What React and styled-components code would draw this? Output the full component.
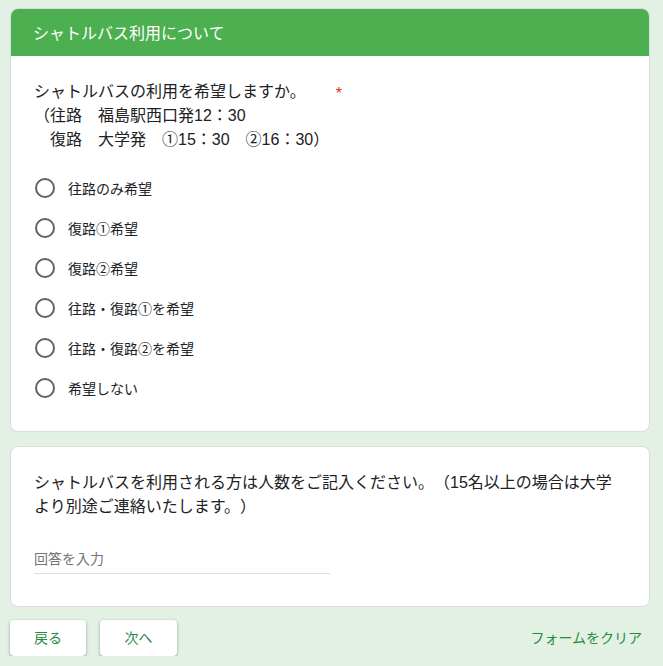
import React from 'react';
import styled, { createGlobalStyle } from 'styled-components';

const Global = createGlobalStyle`
  body {
    margin: 0;
    background: #e3f1e4;
    font-family: "Liberation Sans", "Noto Sans CJK JP", sans-serif;
    color: #202124;
    text-spacing-trim: space-all;
  }
`;

const Page = styled.div`
  padding: 8px 13px 0 10px;
  display: flex;
  flex-direction: column;
  gap: 14px;
  width: 640px;
`;

const Card = styled.section`
  background: #fff;
  border: 1px solid #dadce0;
  border-radius: 8px;
  overflow: hidden;
`;

const Header = styled.div`
  background: #4caf50;
  color: #fff;
  height: 48px;
  display: flex;
  align-items: center;
  padding: 0 23px;
  font-size: 16px;
  margin: -1px -1px 0;
`;

const Body = styled.div`
  padding: ${p => p.$top || 24}px 23px ${p => p.$bottom || 24}px;
`;

const Question = styled.div`
  font-size: 16px;
  line-height: 24px;
  white-space: ${p => (p.$pre ? 'pre' : 'normal')};
`;

const Star = styled.span`
  color: #d93025;
  margin-left: 30px;
  position: relative;
  top: 2px;
`;

const Options = styled.div`
  margin-top: 16px;
  display: flex;
  flex-direction: column;
`;

const Option = styled.label`
  height: 40px;
  display: flex;
  align-items: center;
  gap: 13px;
  font-size: 14px;
`;

const Radio = styled.span`
  width: 20px;
  height: 20px;
  box-sizing: border-box;
  border: 2px solid #5f6368;
  border-radius: 50%;
  margin-left: 1px;
`;

const Input = styled.div`
  margin-top: 24px;
  width: 296px;
  height: 30px;
  border-bottom: 1px solid #e0e0e0;
  display: flex;
  align-items: center;
  font-size: 14px;
  color: #70757a;
`;

const Footer = styled.div`
  display: flex;
  align-items: center;
  gap: 14px;
  margin-top: -1px;
`;

const Button = styled.button`
  width: ${p => p.$w}px;
  height: 36px;
  padding: 0 0 3px;
  background: #fff;
  border: none;
  border-radius: 4px;
  box-shadow: 0 1px 2px rgba(60, 64, 67, 0.3), 0 1px 3px 1px rgba(60, 64, 67, 0.15);
  color: #1e8e3e;
  font-family: inherit;
  font-size: 14px;
`;

const Clear = styled.span`
  margin-left: auto;
  margin-right: 8px;
  margin-bottom: 3px;
  color: #1e8e3e;
  font-size: 14px;
`;

const options = [
  '往路のみ希望',
  '復路①希望',
  '復路②希望',
  '往路・復路①を希望',
  '往路・復路②を希望',
  '希望しない',
];

export default function App() {
  return (
    <>
      <Global />
      <Page>
        <Card>
          <Header>シャトルバス利用について</Header>
          <Body $top={24} $bottom={23}>
            <Question $pre>
              シャトルバスの利用を希望しますか。<Star>*</Star>
              {'\n（往路　福島駅西口発12：30\n　復路　大学発　①15：30　②16：30）'}
            </Question>
            <Options>
              {options.map(o => (
                <Option key={o}>
                  <Radio />
                  {o}
                </Option>
              ))}
            </Options>
          </Body>
        </Card>
        <Card>
          <Body $top={24} $bottom={32}>
            <Question>
              シャトルバスを利用される方は人数をご記入ください。（15名以上の場合は大学より別途ご連絡いたします。）
            </Question>
            <Input>回答を入力</Input>
          </Body>
        </Card>
        <Footer>
          <Button $w={76}>戻る</Button>
          <Button $w={77}>次へ</Button>
          <Clear>フォームをクリア</Clear>
        </Footer>
      </Page>
    </>
  );
}
